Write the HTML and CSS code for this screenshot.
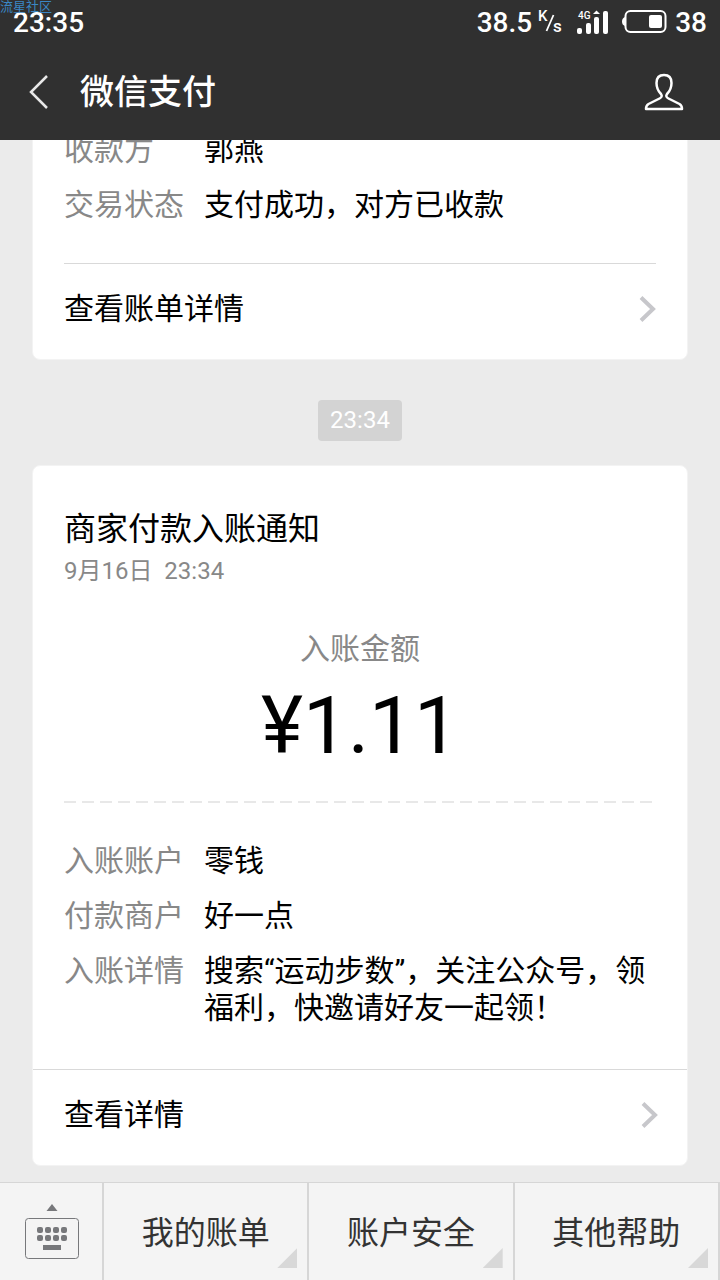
FILE: index.html
```html
<!DOCTYPE html>
<html lang="zh-CN">
<head>
<meta charset="utf-8">
<meta name="viewport" content="width=device-width, initial-scale=1">
<title>微信支付</title>
<link rel="stylesheet" href="styles.css">
</head>
<body>
<div class="app">
  <span class="watermark">流星社区</span>
  <div class="status">
    <span class="status-time">23:35</span>
    <div class="status-right">
      <span>38.5</span>
      <svg class="speed" width="26" height="28" viewBox="0 0 26 28" aria-label="K/s">
        <text x="0" y="13" font-size="15">K</text>
        <path d="M8.500 23 L15.500 7" stroke="#fff" stroke-width="1.800"/>
        <text x="15" y="24" font-size="17">s</text>
      </svg>
      <svg class="signal" width="32" height="28" viewBox="0 0 32 28" aria-label="4G">
        <text x="1" y="11" font-size="10">4G</text>
        <g fill="#fff">
          <rect x="0" y="20" width="5" height="6" rx="2"/>
          <rect x="9" y="15" width="5" height="11" rx="2"/>
          <rect x="17" y="9" width="5" height="17" rx="2"/>
          <path d="M16 6 L19.500 2.500 L23 6 Z"/>
          <rect x="26" y="3" width="5" height="23" rx="2"/>
        </g>
      </svg>
      <svg class="battery" width="46" height="28" viewBox="0 0 46 28" aria-hidden="true">
        <rect x="3.500" y="3" width="40" height="21" rx="5" fill="none" stroke="#fff" stroke-width="2"/>
        <path d="M3 9 Q0 10 0 13.500 Q0 17 3 18 Z" fill="#fff"/>
        <rect x="27" y="7" width="13" height="13" rx="2" fill="#fff"/>
      </svg>
      <span>38</span>
    </div>
  </div>
  <header class="header">
    <button class="icon-button" type="button" aria-label="返回">
      <svg width="20" height="36" viewBox="0 0 20 36"><path d="M18 2 L2 18 L18 34" fill="none" stroke="#e8e8e8" stroke-width="2.500"/></svg>
    </button>
    <h1 class="header-title">微信支付</h1>
    <button class="icon-button" type="button" aria-label="个人资料">
      <svg width="40" height="38" viewBox="0 0 40 38"><path d="M20 2 C15 2 12.500 5 12.500 10 C12.500 15 14 18 17 21 C18.500 23 17.500 24.500 15.500 25.500 L4.500 31 C2 32.500 2 33.500 2 36 H38 C38 33.500 38 32.500 35.500 31 L24.500 25.500 C22.500 24.500 21.500 23 23 21 C26 18 27.500 15 27.500 10 C27.500 5 25 2 20 2 Z" fill="none" stroke="#fff" stroke-width="2.500" stroke-linejoin="round"/></svg>
    </button>
  </header>

  <main class="chat">
    <article class="card">
      <dl class="rows rows-tight">
        <div class="row"><dt>收款方</dt><dd>郭燕</dd></div>
        <div class="row"><dt>交易状态</dt><dd>支付成功，对方已收款</dd></div>
      </dl>
      <a class="more more-inset" href="#bill">
        <span>查看账单详情</span>
        <svg width="18" height="28" viewBox="0 0 18 28"><path d="M3 2.500 L15 14 L3 25.500" fill="none" stroke="#c7c7cb" stroke-width="4"/></svg>
      </a>
    </article>

    <time class="stamp">23:34</time>

    <article class="card">
      <div class="summary">
        <h2 class="card-title">商家付款入账通知</h2>
        <p class="card-date">9月16日&nbsp; 23:34</p>
        <p class="amount-label">入账金额</p>
        <p class="amount">¥1.11</p>
        <div class="dashes"></div>
      </div>
      <dl class="rows">
        <div class="row"><dt>入账账户</dt><dd>零钱</dd></div>
        <div class="row"><dt>付款商户</dt><dd>好一点</dd></div>
        <div class="row"><dt>入账详情</dt><dd>搜索“运动步数”，关注公众号，领福利，快邀请好友一起领！</dd></div>
      </dl>
      <a class="more more-full" href="#detail">
        <span>查看详情</span>
        <svg width="18" height="28" viewBox="0 0 18 28"><path d="M3 2.500 L15 14 L3 25.500" fill="none" stroke="#c7c7cb" stroke-width="4"/></svg>
      </a>
    </article>
  </main>

  <nav class="tabs">
    <button class="tab tab-keyboard" type="button" aria-label="键盘">
      <svg width="56" height="58" viewBox="0 0 56 58" fill="#77787b">
        <path d="M22.500 9 L28 2 L33.500 9 Z"/>
        <rect x="1.500" y="16.500" width="53" height="40" rx="3" fill="none" stroke="#77787b"/>
        <rect x="13" y="25" width="6" height="6" rx="2"/><rect x="21" y="25" width="6" height="6" rx="2"/><rect x="29" y="25" width="6" height="6" rx="2"/><rect x="37" y="25" width="6" height="6" rx="2"/>
        <rect x="13" y="33" width="6" height="6" rx="2"/><rect x="21" y="33" width="6" height="6" rx="2"/><rect x="29" y="33" width="6" height="6" rx="2"/><rect x="37" y="33" width="6" height="6" rx="2"/>
        <rect x="19" y="43" width="18" height="5"/>
      </svg>
    </button>
    <button class="tab" type="button">我的账单</button>
    <button class="tab" type="button">账户安全</button>
    <button class="tab" type="button">其他帮助</button>
  </nav>
</div>
</body>
</html>
```

FILE: styles.css
```css
* {
  box-sizing: border-box;
  margin: 0;
  padding: 0;
}

body {
  font-family: Roboto, "Noto Sans CJK SC", sans-serif;
  font-size: 30px;
  line-height: 37px;
  color: #000;
  background: #ebebeb;
}

button {
  font: inherit;
  color: inherit;
  background: none;
  border: 0;
}

svg {
  display: block;
  flex: none;
}

.app {
  position: relative;
  display: flex;
  flex-direction: column;
  height: 100vh;
}

.watermark {
  position: absolute;
  top: 0;
  left: 0;
  font-size: 13px;
  line-height: 14px;
  color: #3a87c4;
}

.status {
  display: flex;
  flex: none;
  align-items: center;
  justify-content: space-between;
  height: 44px;
  padding: 0 13px;
  font-size: 28px;
  font-weight: 500;
  color: #fff;
  background: #303030;
}

.status-right {
  display: flex;
  align-items: center;
}

.status text {
  font-weight: 500;
  fill: #fff;
}

.speed {
  margin-left: 6px;
}

.signal {
  margin-left: 13px;
}

.battery {
  margin: 0 7px 0 13px;
}

.header {
  display: flex;
  flex: none;
  align-items: center;
  height: 96px;
  padding: 0 36px 0 29px;
  color: #fff;
  background: #303030;
}

.header-title {
  flex: 1;
  margin-left: 31px;
  font-size: 34px;
  font-weight: 500;
}

.chat {
  display: flex;
  flex: 1;
  flex-direction: column;
  justify-content: flex-end;
  min-height: 0;
  padding: 0 32px 16px;
  overflow: hidden;
}

.card {
  flex: none;
  background: #fff;
  border: 1px solid #f3f3f3;
  border-radius: 8px;
}

.rows {
  display: flex;
  flex-direction: column;
  gap: 18px;
  padding: 39px 31px 43px;
}

.rows-tight {
  padding-bottom: 40px;
}

.row {
  display: flex;
}

.row dt {
  flex: none;
  width: 140px;
  color: #888;
}

.row dd {
  flex: 1;
}

.more {
  display: flex;
  align-items: center;
  justify-content: space-between;
  height: 96px;
  padding-bottom: 6px;
  color: #000;
  text-decoration: none;
  border-top: 1px solid #d9d9d9;
}

.more-inset {
  margin: 0 31px;
}

.more-full {
  padding-right: 29px;
  padding-left: 31px;
}

.stamp {
  flex: none;
  align-self: center;
  margin: 40px 0 24px;
  padding: 2px 12px;
  font-size: 24px;
  color: #fff;
  background: #d3d3d3;
  border-radius: 4px;
}

.summary {
  padding: 45px 31px 0;
}

.card-title {
  font-size: 32px;
  font-weight: 400;
}

.card-date {
  margin-top: 8px;
  font-size: 24px;
  line-height: 30px;
  color: #888;
}

.amount-label {
  margin-top: 44px;
  color: #888;
  text-align: center;
}

.amount {
  margin-top: 12px;
  font-size: 80px;
  line-height: 94px;
  text-align: center;
}

.dashes {
  height: 2px;
  margin-top: 28px;
  background: repeating-linear-gradient(to right, #e8e8e8 0 12px, transparent 12px 18px);
}

.tabs {
  display: flex;
  flex: none;
  height: 98px;
  background: #f4f4f4;
  border-top: 1px solid #d6d6d6;
}

.tab {
  position: relative;
  flex: 1;
  padding-top: 4px;
  font-size: 32px;
  color: #333;
  border-right: 2px solid #d6d6d6;
}

.tab:not(.tab-keyboard)::after {
  position: absolute;
  right: 10px;
  bottom: 12px;
  width: 20px;
  height: 20px;
  content: "";
  background: #d8d8d8;
  clip-path: polygon(100% 0, 100% 100%, 0 100%);
}

.tab-keyboard {
  display: flex;
  flex: none;
  align-items: center;
  justify-content: center;
  width: 104px;
  padding: 0 0 2px 2px;
}
```
